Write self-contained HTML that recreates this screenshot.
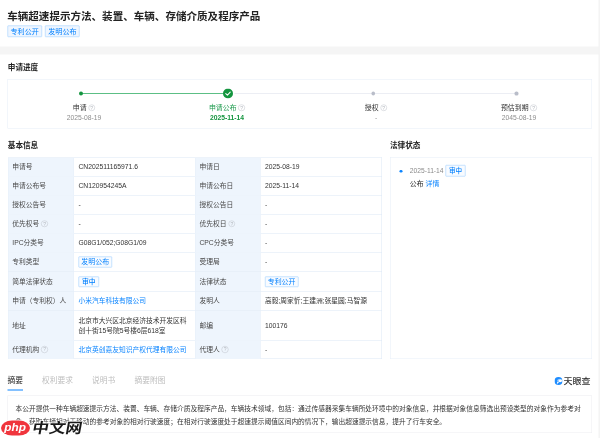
<!DOCTYPE html>
<html lang="zh-CN">
<head>
<meta charset="utf-8">
<title>车辆超速提示方法、装置、车辆、存储介质及程序产品</title>
<style>
*{box-sizing:border-box;margin:0;padding:0}
html,body{width:600px;height:438px;overflow:hidden;background:#fff}
body{position:relative;font-family:"Liberation Sans","Noto Sans CJK SC",sans-serif;color:#333;font-size:13.8px;line-height:1;-webkit-text-size-adjust:none}
.abs{position:absolute}
.title{left:14.4px;top:18.8px;font-size:21.1px;font-weight:700;color:#222;line-height:26px;white-space:nowrap;letter-spacing:0}
.tag{position:absolute;height:22.8px;border:1.4px solid #93c8ff;background:#f8fbff;color:#0080ff;border-radius:1.4px;font-size:13.9px;line-height:20.4px;text-align:center;white-space:nowrap}
.band{left:0;top:93.4px;width:1200px;height:15.2px;background:#f5f5f5}
.rstrip{right:0;top:0;width:3.4px;height:876px;background:#f4f4f4}
.h{font-size:15.2px;font-weight:700;color:#222;line-height:20px;white-space:nowrap}
.box{border:1.2px solid #e6eef8;background:#fff}
.q{display:inline-block;width:13.6px;height:13.6px;border:1.1px solid #bfc3ca;border-radius:50%;color:#b4b8bf;font-size:10px;line-height:11.4px;text-align:center;vertical-align:middle;font-family:"Liberation Sans",sans-serif;font-weight:400}
.step{position:absolute;top:204px;width:160px;text-align:center;white-space:nowrap}
.step .l{font-size:13.8px;line-height:22px;color:#333}
.step .d{font-size:13.5px;line-height:18px;color:#8c8c8c;margin-top:0}
.step.on .l{color:#1b9a4c}
.step.on .d{color:#14953f;font-weight:700}
.row{position:absolute;left:0;width:748.8px;border-top:1.2px solid #dbe6f4}
.c{position:absolute;top:0;bottom:0;display:flex;align-items:center;white-space:nowrap;font-size:13.5px}
.lab{background:#eef5fd;color:#484848;padding-left:8px;border-right:1.2px solid #e6eef9;border-left:1.2px solid #e6eef9}
.l1{left:0;width:132.4px}
.v1{left:132.4px;width:242px;padding-left:9px;color:#333}
.l2{left:374.4px;width:130.8px}
.v2{left:505.2px;width:243.6px;padding-left:9px;color:#333}
.lnk{color:#0a84ff}
.itag{display:inline-block;height:21.6px;border:1.4px solid #93c8ff;background:#f8fbff;color:#0080ff;border-radius:1.4px;font-size:13.9px;line-height:18.8px;padding:0 4.6px;white-space:nowrap}
.tab{position:absolute;top:750.4px;font-size:15.5px;line-height:20px;color:#bdbdbd;white-space:nowrap}
</style>
</head>
<body><div id="w" style="position:absolute;left:0;top:0;width:1200px;height:876px;transform:scale(0.5);transform-origin:0 0">
<div class="abs title">车辆超速提示方法、装置、车辆、存储介质及程序产品</div>
<div class="tag" style="left:15.2px;top:50.8px;width:68.4px;background:#eff6ff;font-size:14.2px">专利公开</div>
<div class="tag" style="left:90.4px;top:50.8px;width:68.8px;background:#eff6ff;font-size:14.2px">发明公布</div>
<div class="abs band"></div>
<div class="abs rstrip"></div>

<div class="abs h" style="left:15.6px;top:125.2px">申请进度</div>
<div class="abs box" style="left:15px;top:158.4px;width:1169px;height:98.8px"></div>
<!-- progress line -->
<div class="abs" style="left:162px;top:185.9px;width:290px;height:2.4px;background:#5cbf85"></div>
<div class="abs" style="left:468.6px;top:186px;width:565px;height:2.2px;background:#eceef4"></div>
<div class="abs" style="left:158px;top:182.8px;width:8.4px;height:8.4px;border-radius:50%;background:#14953f"></div>
<svg class="abs" style="left:445.8px;top:177.2px;width:20px;height:20px" viewBox="0 0 18 18"><circle cx="9" cy="9" r="9" fill="#14953f"/><path d="M5 9.3 L8 12 L13 6.6" fill="none" stroke="#fff" stroke-width="1.9" stroke-linecap="round" stroke-linejoin="round"/></svg>
<div class="abs" style="left:742.8px;top:183.4px;width:7.4px;height:7.4px;border-radius:50%;background:#b9bdc9"></div>
<div class="abs" style="left:1029.4px;top:183.4px;width:7.4px;height:7.4px;border-radius:50%;background:#b9bdc9"></div>

<div class="step" style="left:88px"><div class="l">申请<span class="q" style="margin-left:3.4px">?</span></div><div class="d">2025-08-19</div></div>
<div class="step on" style="left:374px"><div class="l">申请公布<span class="q" style="margin-left:3.4px">?</span></div><div class="d">2025-11-14</div></div>
<div class="step" style="left:672px"><div class="l">授权<span class="q" style="margin-left:3.4px">?</span></div><div class="d">-</div></div>
<div class="step" style="left:958px"><div class="l">预估到期<span class="q" style="margin-left:3.4px">?</span></div><div class="d">2045-08-19</div></div>

<div class="abs h" style="left:15.6px;top:281.2px">基本信息</div>
<div class="abs h" style="left:780px;top:281.2px">法律状态</div>

<!-- table -->
<div class="abs" style="left:15.6px;top:314.6px;width:748.8px;height:403.2px;border-bottom:1.2px solid #dbe6f4;border-right:1.2px solid #dbe6f4">
 <div class="row" style="top:0;height:37.8px"><div class="c lab l1">申请号</div><div class="c v1">CN202511165971.6</div><div class="c lab l2">申请日</div><div class="c v2">2025-08-19</div></div>
 <div class="row" style="top:37.8px;height:37.8px"><div class="c lab l1">申请公布号</div><div class="c v1">CN120954245A</div><div class="c lab l2">申请公布日</div><div class="c v2">2025-11-14</div></div>
 <div class="row" style="top:75.6px;height:37.8px"><div class="c lab l1">授权公告号</div><div class="c v1">-</div><div class="c lab l2">授权公告日</div><div class="c v2">-</div></div>
 <div class="row" style="top:113.4px;height:37.8px"><div class="c lab l1">优先权号&nbsp;<span class="q">?</span></div><div class="c v1">-</div><div class="c lab l2">优先权日&nbsp;<span class="q">?</span></div><div class="c v2">-</div></div>
 <div class="row" style="top:151.2px;height:37.8px"><div class="c lab l1">IPC分类号</div><div class="c v1">G08G1/052;G08G1/09</div><div class="c lab l2">CPC分类号</div><div class="c v2">-</div></div>
 <div class="row" style="top:189px;height:39.8px"><div class="c lab l1">专利类型</div><div class="c v1"><span class="itag">发明公布</span></div><div class="c lab l2">受理局</div><div class="c v2">-</div></div>
 <div class="row" style="top:228.8px;height:39.4px"><div class="c lab l1">简单法律状态</div><div class="c v1"><span class="itag" style="font-weight:500;padding:0 5.8px;font-size:13.6px">审中</span></div><div class="c lab l2">法律状态</div><div class="c v2"><span class="itag">专利公开</span></div></div>
 <div class="row" style="top:268.2px;height:37.8px"><div class="c lab l1">申请（专利权）人</div><div class="c v1 lnk">小米汽车科技有限公司</div><div class="c lab l2">发明人</div><div class="c v2">高毅;周家忻;王建洲;张星圆;马智源</div></div>
 <div class="row" style="top:306px;height:59px"><div class="c lab l1">地址</div><div class="c v1" style="white-space:normal;line-height:21px;padding-right:8px"><span>北京市大兴区北京经济技术开发区科创十街15号院5号楼6层618室</span></div><div class="c lab l2">邮编</div><div class="c v2">100176</div></div>
 <div class="row" style="top:365px;height:38.2px"><div class="c lab l1">代理机构&nbsp;<span class="q">?</span></div><div class="c v1 lnk">北京英创嘉友知识产权代理有限公司</div><div class="c lab l2">代理人&nbsp;<span class="q">?</span></div><div class="c v2">-</div></div>
</div>

<!-- legal box -->
<div class="abs box" style="left:779.6px;top:314.2px;width:404.4px;height:403.6px"></div>
<div class="abs" style="left:799.4px;top:339.6px;width:5.2px;height:5.2px;border-radius:50%;background:#0a84ff"></div>
<div class="abs" style="left:819.6px;top:333px;font-size:13.4px;line-height:18px;color:#8a8a8a;white-space:nowrap">2025-11-14</div>
<div class="tag" style="left:890.8px;top:330.4px;width:40.4px;font-weight:500;font-size:13.2px">审中</div>
<div class="abs" style="left:819.6px;top:357.2px;font-size:13.8px;line-height:20px;color:#222;white-space:nowrap">公布 <span class="lnk">详情</span></div>

<!-- tabs -->
<div class="tab" style="left:15px;color:#222">摘要</div>
<div class="tab" style="left:84px">权利要求</div>
<div class="tab" style="left:184px">说明书</div>
<div class="tab" style="left:269px">摘要附图</div>
<div class="abs" style="left:15px;top:778.6px;width:31.2px;height:2.2px;background:#0a84ff"></div>

<!-- tianyancha logo -->
<svg class="abs" style="left:1109.4px;top:753.6px;width:16px;height:16px;filter:blur(0.4px)" viewBox="0 0 20 20"><circle cx="10" cy="10" r="10" fill="#1f8dff"/><path d="M12 13.2 C9.6 13.8 7.6 15.6 6.4 18.6 C5.6 15.2 6.6 12.4 8.6 10.8 Z" fill="#fff"/><path d="M7 9.6 C7.4 6.2 10 4 13.4 4.2 C10.6 4.8 8.6 6.8 8.4 9.8 Z" fill="#d6e9ff"/><ellipse cx="14.2" cy="9.6" rx="4.8" ry="3.7" fill="#fff"/></svg>
<div class="abs" style="left:1126.8px;top:750.6px;font-size:18.1px;line-height:22px;font-weight:500;color:#333;white-space:nowrap;transform:scaleY(0.87);transform-origin:0 50%">天眼查</div>

<!-- abstract -->
<div class="abs box" style="left:15px;top:790.8px;width:1169px;height:75.2px;border-color:#ececf0"></div>
<div class="abs" style="left:31.2px;top:805px;width:1144px;font-size:13.46px;line-height:25px;color:#333">本公开提供一种车辆超速提示方法、装置、车辆、存储介质及程序产品，车辆技术领域，包括：通过传感器采集车辆所处环境中的对象信息，并根据对象信息筛选出预设类型的对象作为参考对象，获取车辆相对于移动的参考对象的相对行驶速度；在相对行驶速度处于超速提示阈值区间内的情况下，输出超速提示信息，提升了行车安全。</div>

<!-- watermark -->
<div class="abs" style="left:0;top:838px;width:180px;height:38px;pointer-events:none">
 <div class="abs" style="left:1.6px;top:3px;width:58.4px;height:30px;border-radius:22px/15px;background:#f0353d;box-shadow:0 0 2.4px 1.6px #fff"></div>
 <div class="abs" style="left:3.2px;top:2.2px;width:54px;text-align:center;font-size:23.6px;line-height:28px;font-weight:700;font-style:italic;color:#fff;letter-spacing:0">php</div>
 <div class="abs" style="left:65.2px;top:0.2px;font-size:28.4px;line-height:36px;font-weight:700;color:#1a1a1a;white-space:nowrap;transform:scaleX(1.17) skewX(-9deg);transform-origin:0 50%;text-shadow:0 0 3px #fff,0 0 3px #fff,0 0 4px #fff,0 0 4px #fff">中文网</div>
</div>
</div></body>
</html>
